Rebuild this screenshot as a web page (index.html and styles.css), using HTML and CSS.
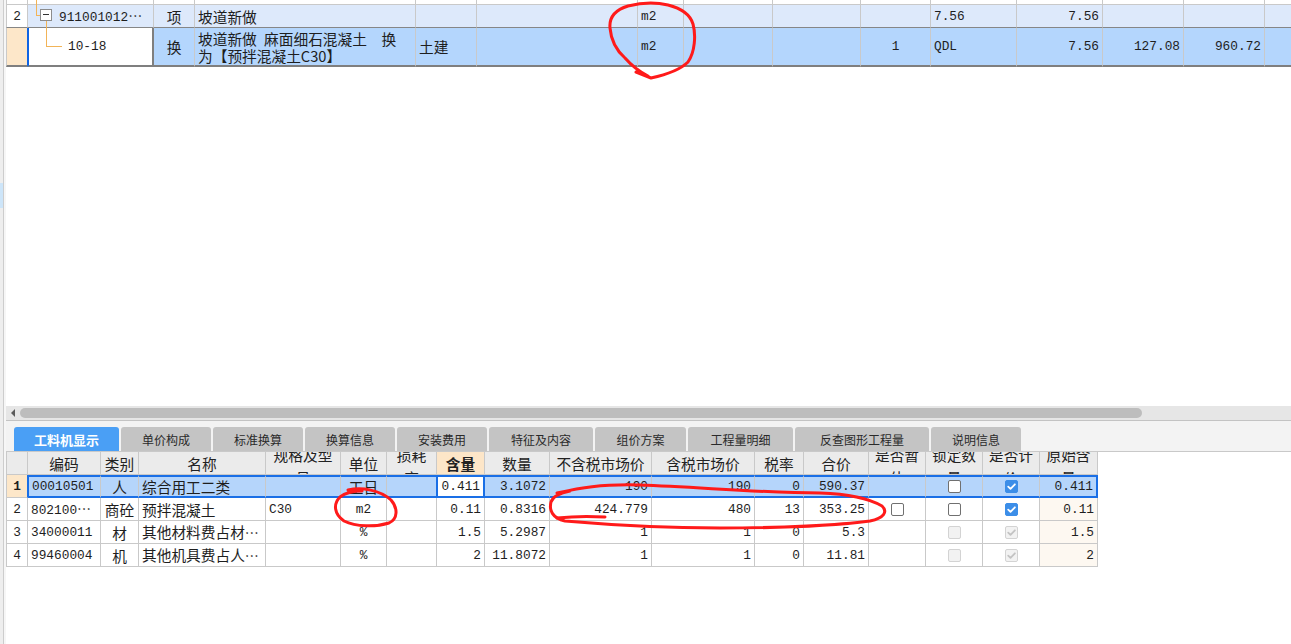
FILE: index.html
```html
<!DOCTYPE html>
<html lang="zh-CN">
<head>
<meta charset="utf-8">
<title>工料机显示</title>
<link rel="stylesheet" href="styles.css">
</head>
<body>
<div class="app">
  <div class="gutter"><div class="gutter-mark"></div></div>
  <div class="main">
    <div class="top-area">
      <table class="grid top">
        <colgroup><col><col><col><col><col><col><col><col><col><col><col><col><col><col><col></colgroup>
        <tr class="stub">
          <td class="rn"></td><td class="tree"><span class="tl t-stub"></span></td><td></td><td></td><td></td><td></td><td></td><td></td><td></td><td></td><td></td><td></td><td></td><td></td><td></td>
        </tr>
        <tr class="r1">
          <td class="rn m">2</td>
          <td class="tree tree1 m"><span class="tl v1"></span><span class="tl h1"></span><span class="tbox"></span><span class="tl v2"></span>911001012<span class="ell">…</span></td>
          <td class="c">项</td>
          <td>坡道新做</td>
          <td></td>
          <td></td>
          <td class="m">m2</td>
          <td></td>
          <td></td>
          <td></td>
          <td class="m">7.56</td>
          <td class="m r">7.56</td>
          <td></td>
          <td></td>
          <td></td>
        </tr>
        <tr class="r2">
          <td class="rn"></td>
          <td class="tree tree2 cur m"><span class="tl v3"></span><span class="tl h3"></span>10-18</td>
          <td class="c">换</td>
          <td>坡道新做&ensp;麻面细石混凝土&ensp;&ensp;换<br>为【预拌混凝土C30】</td>
          <td>土建</td>
          <td></td>
          <td class="m">m2</td>
          <td></td>
          <td></td>
          <td class="m c">1</td>
          <td class="m">QDL</td>
          <td class="m r">7.56</td>
          <td class="m r">127.08</td>
          <td class="m r">960.72</td>
          <td></td>
        </tr>
      </table>
    </div>
    <div class="hscroll"><span class="arrow"></span><div class="thumb"></div></div>
    <div class="tabbar">
      <div class="tab on">工料机显示</div>
      <div class="tab">单价构成</div>
      <div class="tab">标准换算</div>
      <div class="tab">换算信息</div>
      <div class="tab">安装费用</div>
      <div class="tab">特征及内容</div>
      <div class="tab">组价方案</div>
      <div class="tab">工程量明细</div>
      <div class="tab">反查图形工程量</div>
      <div class="tab">说明信息</div>
    </div>
    <div class="bottom-area">
      <table class="grid bot">
        <colgroup><col><col><col><col><col><col><col><col><col><col><col><col><col><col><col><col><col></colgroup>
        <tr class="hd">
          <td class="rn"></td>
          <td>编码</td>
          <td>类别</td>
          <td>名称</td>
          <td><div class="hw"><span>规格及型号</span></div></td>
          <td>单位</td>
          <td><div class="hw"><span>损耗率</span></div></td>
          <td class="hl">含量</td>
          <td>数量</td>
          <td>不含税市场价</td>
          <td>含税市场价</td>
          <td>税率</td>
          <td>合价</td>
          <td><div class="hw"><span>是否暂估</span></div></td>
          <td><div class="hw"><span>锁定数量</span></div></td>
          <td><div class="hw"><span>是否计价</span></div></td>
          <td><div class="hw"><span>原始含量</span></div></td>
        </tr>
        <tr class="sel">
          <td class="rn m">1</td>
          <td class="first m">00010501</td>
          <td class="c">人</td>
          <td>综合用工二类</td>
          <td></td>
          <td class="c">工日</td>
          <td class="precur"></td>
          <td class="cur m r">0.411</td>
          <td class="m r">3.1072</td>
          <td class="m r">190</td>
          <td class="m r">190</td>
          <td class="m r">0</td>
          <td class="m r">590.37</td>
          <td></td>
          <td class="ck"><span class="cb"></span></td>
          <td class="ck"><span class="cb on"><svg viewBox="0 0 11 11"><path d="M2.2 5.6 L4.5 7.9 L8.9 3.3"/></svg></span></td>
          <td class="last m r">0.411</td>
        </tr>
        <tr>
          <td class="rn m">2</td>
          <td class="m">802100<span class="ell">…</span></td>
          <td class="c">商砼</td>
          <td>预拌混凝土</td>
          <td class="m">C30</td>
          <td class="m c">m2</td>
          <td></td>
          <td class="m r">0.11</td>
          <td class="m r">0.8316</td>
          <td class="m r">424.779</td>
          <td class="m r">480</td>
          <td class="m r">13</td>
          <td class="m r">353.25</td>
          <td class="ck"><span class="cb"></span></td>
          <td class="ck"><span class="cb"></span></td>
          <td class="ck"><span class="cb on"><svg viewBox="0 0 11 11"><path d="M2.2 5.6 L4.5 7.9 L8.9 3.3"/></svg></span></td>
          <td class="orig m r">0.11</td>
        </tr>
        <tr>
          <td class="rn m">3</td>
          <td class="m">34000011</td>
          <td class="c">材</td>
          <td>其他材料费占材<span class="ell">…</span></td>
          <td></td>
          <td class="m c">%</td>
          <td></td>
          <td class="m r">1.5</td>
          <td class="m r">5.2987</td>
          <td class="m r">1</td>
          <td class="m r">1</td>
          <td class="m r">0</td>
          <td class="m r">5.3</td>
          <td></td>
          <td class="ck"><span class="cb dis"></span></td>
          <td class="ck"><span class="cb dis on"><svg viewBox="0 0 11 11"><path d="M2.2 5.6 L4.5 7.9 L8.9 3.3"/></svg></span></td>
          <td class="orig m r">1.5</td>
        </tr>
        <tr>
          <td class="rn m">4</td>
          <td class="m">99460004</td>
          <td class="c">机</td>
          <td>其他机具费占人<span class="ell">…</span></td>
          <td></td>
          <td class="m c">%</td>
          <td></td>
          <td class="m r">2</td>
          <td class="m r">11.8072</td>
          <td class="m r">1</td>
          <td class="m r">1</td>
          <td class="m r">0</td>
          <td class="m r">11.81</td>
          <td></td>
          <td class="ck"><span class="cb dis"></span></td>
          <td class="ck"><span class="cb dis on"><svg viewBox="0 0 11 11"><path d="M2.2 5.6 L4.5 7.9 L8.9 3.3"/></svg></span></td>
          <td class="orig m r">2</td>
        </tr>
      </table>
    </div>
  </div>
</div>
<svg class="marks" width="1291" height="644" viewBox="0 0 1291 644">
  <path d="M636 72 L651 78 C665 75 680 70 688 62 C695 52 696 35 693 24 C690 14 680 8 668 5 C655 2 640 3 628 6 C615 10 609 17 610 28 C611 40 616 50 625 58 C632 66 640 72 648 76"/>
  <path d="M348 490 C362 487 380 490 391 500 C398 508 398 519 389 523 C376 527 356 527 344 521 C334 514 333 504 340 497 C345 493 352 491 362 491"/>
  <path d="M557 493 C580 488 600 484 640 485 C700 487 760 493 820 493 C850 494 870 499 882 506 C888 512 884 518 870 521 C840 525 780 528 720 528 C660 528 600 524 565 521 C552 518 549 510 551 502 C553 496 560 493 570 491"/>
  <path d="M557 518 C575 516 590 516 605 517"/>
</svg>
</body>
</html>
```

FILE: styles.css
```css
* { box-sizing: border-box; }
html, body { margin: 0; padding: 0; }
body {
  width: 1291px;
  height: 644px;
  overflow: hidden;
  position: relative;
  background: #fff;
  font-family: "Noto Sans CJK SC", "Noto Sans", sans-serif;
  font-size: 14.7px;
  color: #1e1e1e;
}
.app { display: flex; height: 644px; }
.gutter {
  flex: none;
  width: 6px;
  background: linear-gradient(to right, #eeeeee 0, #eeeeee 3px, #cdcdcd 3px, #cdcdcd 4px, #f6f6f6 4px, #f6f6f6 6px);
}
.gutter-mark { width: 3px; height: 25px; margin-top: 183px; background: #cde5f9; }
.main { flex: 1; min-width: 0; display: flex; flex-direction: column; }
.top-area { flex: none; height: 406px; overflow: hidden; }

/* grids */
.grid { border-collapse: separate; border-spacing: 0; table-layout: fixed; }
.grid td {
  padding: 0 3px;
  border-right: 1px solid #c9c9c9;
  border-bottom: 1px solid #c9c9c9;
  line-height: 17px;
  white-space: nowrap;
  overflow: hidden;
  vertical-align: middle;
}
.grid td.rn { border-left: 1px solid #c9c9c9; text-align: center; padding: 0; }
.m { font-family: "Liberation Mono", "Noto Sans CJK SC", monospace; font-size: 12.8px; }
.ell { font-family: "Noto Sans CJK SC", sans-serif; font-size: 14px; }
.c { text-align: center; }
.r { text-align: right; }

/* top grid */
.top { width: 1299px; }
.top col:nth-child(1) { width: 22px; }
.top col:nth-child(2) { width: 126px; }
.top col:nth-child(3) { width: 41px; }
.top col:nth-child(4) { width: 221px; }
.top col:nth-child(5) { width: 61px; }
.top col:nth-child(6) { width: 161px; }
.top col:nth-child(7) { width: 46px; }
.top col:nth-child(8) { width: 89px; }
.top col:nth-child(9) { width: 88px; }
.top col:nth-child(10) { width: 70px; }
.top col:nth-child(11) { width: 86px; }
.top col:nth-child(12) { width: 86px; }
.top col:nth-child(13) { width: 81px; }
.top col:nth-child(14) { width: 81px; }
.top col:nth-child(15) { width: 40px; }
.top .stub { height: 5px; }
.top .stub td { line-height: 0; font-size: 0; padding: 0; }
.top .r1 { height: 23px; }
.top .r1 td { background: #dde9fb; border-bottom-color: #868686; }
.top .r1 td.rn { background: #fff; }
.top .r2 { height: 39px; }
.top .r2 td { background: #b4d6fd; border-bottom: 2px solid #7f7f7f; }
.top .r2 td.rn { background: #fde7c9; border-right-color: #1064e3; }
.top .r2 td.cur { background: #fff; border-left: 1px solid #1064e3; border-right: 2px solid #7f7f7f; }

/* tree connectors */
.grid td.tree { position: relative; overflow: visible; }
.grid td.tree1 { padding-left: 31px; }
.grid td.tree2 { padding-left: 39px; }
.tl { position: absolute; background: #f2b458; }
.t-stub { left: 8px; top: 0; width: 1px; height: 5px; }
.tree1 .v1 { left: 8px; top: -1px; width: 1px; height: 11px; }
.tree1 .h1 { left: 8px; top: 10px; width: 4px; height: 1px; }
.tree1 .v2 { left: 18px; top: 16px; width: 1px; height: 7px; }
.tbox {
  position: absolute;
  left: 12px;
  top: 4px;
  width: 12px;
  height: 12px;
  border: 1px solid #8c8c8c;
  background: #fff;
}
.tbox::after {
  content: "";
  position: absolute;
  left: 2px;
  top: 4px;
  width: 6px;
  height: 1px;
  background: #333;
}
.tree2 .v3 { left: 17px; top: -1px; width: 1px; height: 19px; }
.tree2 .h3 { left: 17px; top: 18px; width: 16px; height: 1px; }

/* scrollbar */
.hscroll {
  flex: none;
  height: 14px;
  background: #e6e6e6;
  display: flex;
  align-items: center;
  padding-left: 5px;
}
.arrow {
  width: 0;
  height: 0;
  border-right: 4px solid #5c5c5c;
  border-top: 4px solid transparent;
  border-bottom: 4px solid transparent;
}
.thumb { margin-left: 5px; width: 1122px; height: 10px; border-radius: 5px; background: #bdbdbd; }

/* tabs */
.tabbar {
  flex: none;
  height: 32px;
  background: #f3f3f3;
  border-top: 1px solid #c3c3c3;
  border-bottom: 1px solid #c9c9c9;
  padding: 6px 0 0 8px;
  display: grid;
  grid-template-columns: 105px 90px 90px 90px 90px 104px 91px 105px 134px 90px;
  column-gap: 2px;
}
.tab {
  height: 24px;
  background: #c4c4c4;
  border-radius: 3px 3px 0 0;
  font-size: 12px;
  color: #2a2a2a;
  display: flex;
  align-items: center;
  justify-content: center;
}
.tab.on { background: #4a9ff5; color: #fff; font-weight: bold; font-size: 13px; }

/* bottom grid */
.bottom-area { flex: 1; }
.bot { width: 1092px; }
.bot col:nth-child(1) { width: 22px; }
.bot col:nth-child(2) { width: 73px; }
.bot col:nth-child(3) { width: 38px; }
.bot col:nth-child(4) { width: 127px; }
.bot col:nth-child(5) { width: 75px; }
.bot col:nth-child(6) { width: 46px; }
.bot col:nth-child(7) { width: 50px; }
.bot col:nth-child(8) { width: 48px; }
.bot col:nth-child(9) { width: 65px; }
.bot col:nth-child(10) { width: 102px; }
.bot col:nth-child(11) { width: 103px; }
.bot col:nth-child(12) { width: 49px; }
.bot col:nth-child(13) { width: 65px; }
.bot col:nth-child(14) { width: 57px; }
.bot col:nth-child(15) { width: 57px; }
.bot col:nth-child(16) { width: 57px; }
.bot col:nth-child(17) { width: 58px; }
.bot tr { height: 23px; }
.bot .hd td { background: #ebebeb; text-align: center; color: #222; }
.bot .hd td.hl { background: #fde6c8; font-weight: bold; }
.hw { height: 22px; overflow: hidden; }
.hw span { display: block; margin-top: -9px; line-height: 23px; white-space: normal; }

.bot .sel td { background: #b5d5fb; border-top: 2px solid #1a6fe6; border-bottom: 2px solid #1a6fe6; }
.bot .sel td.rn {
  background: #fde7c9;
  border-top: none;
  border-bottom: 1px solid #c9c9c9;
  border-right: 1px solid #1a6fe6;
  font-weight: bold;
}
.bot .sel td.first { border-left: 1px solid #1a6fe6; }
.bot .sel td.precur { border-right-color: #1a6fe6; }
.bot .sel td.cur { background: #fff; border-left: 1px solid #1a6fe6; border-right: 2px solid #1a6fe6; }
.bot .sel td.last { border-right: 2px solid #1a6fe6; }
.bot td.orig { background: #fdf8f1; }

/* checkboxes */
.grid td.ck { padding: 0; }
.cb {
  display: block;
  margin: 0 auto;
  width: 13px;
  height: 13px;
  border: 1px solid #707070;
  border-radius: 2px;
  background: #fff;
  position: relative;
}
.cb svg { position: absolute; left: 0; top: 0; width: 11px; height: 11px; }
.cb svg path { fill: none; stroke: #fff; stroke-width: 1.8; stroke-linecap: round; stroke-linejoin: round; }
.cb.on { background: #3c8ee8; border-color: #3c8ee8; }
.cb.dis { border-color: #d3d3d3; background: #f2f2f2; }
.cb.dis svg path { stroke: #c3c3c3; }

/* hand-drawn annotations */
.marks { position: absolute; left: 0; top: 0; pointer-events: none; }
.marks path {
  fill: none;
  stroke: #ff1a1a;
  stroke-width: 3;
  stroke-linecap: round;
  stroke-linejoin: round;
}
```
